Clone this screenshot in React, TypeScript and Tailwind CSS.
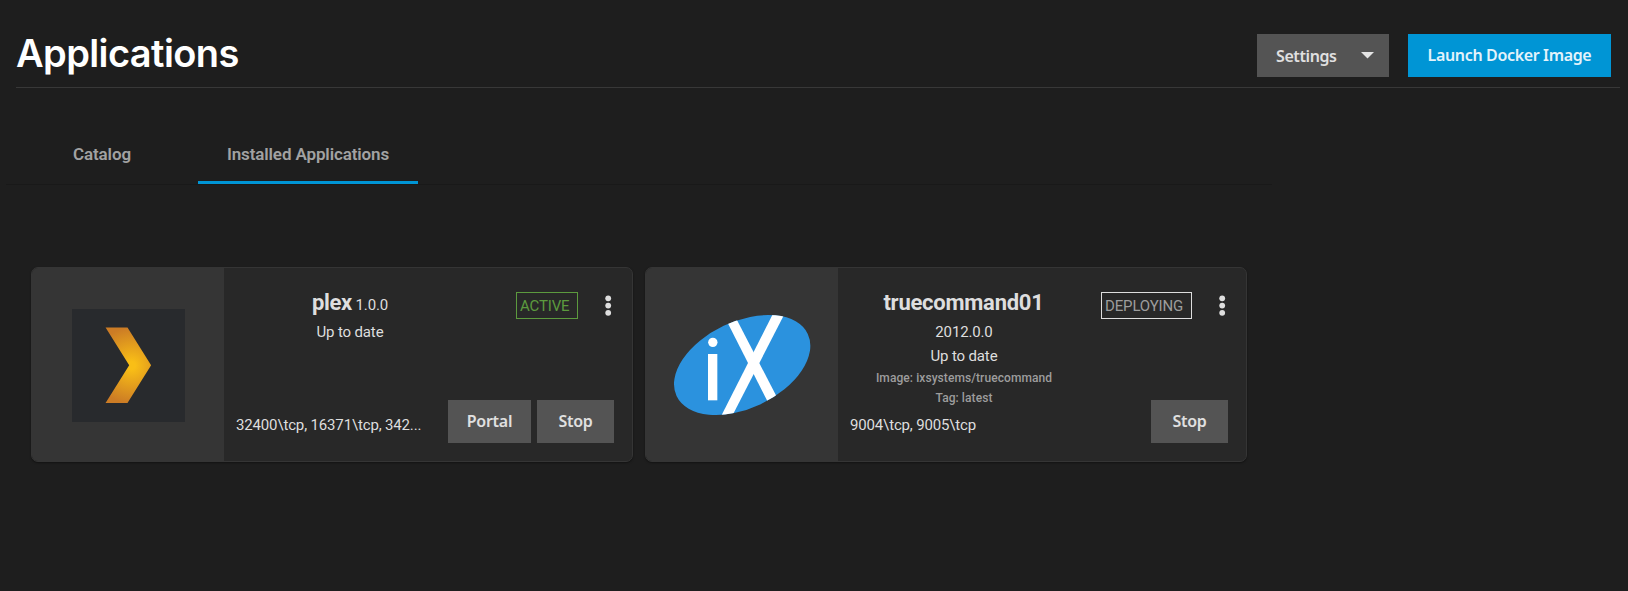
import type { ReactNode } from "react";

const plexSans = "font-['Noto_Sans','Open_Sans',sans-serif]";

function PlexLogo() {
  return (
    <svg className="mt-px ml-px" width="113" height="113" viewBox="0 0 340 340" aria-hidden="true">
      <defs>
        <radialGradient id="plexGlow" gradientUnits="userSpaceOnUse" cx="179" cy="170" r="114">
          <stop offset="0.1" stopColor="#f9be16" />
          <stop offset="1" stopColor="#cc7c25" />
        </radialGradient>
      </defs>
      <rect width="340" height="340" fill="#282a2d" />
      <path d="M101 56H167L238 169L167 283H101L172 169Z" fill="url(#plexGlow)" />
    </svg>
  );
}

function IxLogo() {
  return (
    <svg width="138" height="102" viewBox="99 177 414 306" aria-hidden="true">
      <defs>
        <clipPath id="ixOval">
          <ellipse cx="306.5" cy="330" rx="217.7" ry="130" transform="rotate(-25.3 306.5 330)" />
        </clipPath>
      </defs>
      <g clipPath="url(#ixOval)">
        <rect x="90" y="170" width="430" height="320" fill="#2b92de" />
        <path d="M248 174L280 174L423 450L388 450Z" fill="#fff" />
        <path d="M400 174L435 174L276 484L243 484Z" fill="#fff" />
        <rect x="204" y="297" width="28" height="139" fill="#fff" />
        <circle cx="218.5" cy="262" r="14" fill="#fff" />
      </g>
    </svg>
  );
}

function MoreIcon() {
  return (
    <svg width="12" height="22" viewBox="0 0 12 22" fill="#dedede" aria-hidden="true">
      <circle cx="6.2" cy="3.3" r="2.9" />
      <circle cx="6.2" cy="10.6" r="2.9" />
      <circle cx="6.2" cy="17.8" r="2.9" />
    </svg>
  );
}

function CardButton({ children, className }: { children: ReactNode; className: string }) {
  return (
    <button
      className={`h-[43px] bg-[#545454] pb-0.5 text-base font-semibold tracking-[-0.25px] text-[#e0e0e0] ${plexSans} ${className}`}
    >
      {children}
    </button>
  );
}

type CardProps = {
  logo: ReactNode;
  ports: string;
  badge: ReactNode;
  buttons: ReactNode;
  children: ReactNode;
};

function AppCard({ logo, ports, badge, buttons, children }: CardProps) {
  return (
    <article className="flex h-[195px] w-[602px] overflow-hidden rounded-[7px] border border-[#353535] bg-[#282828] shadow-[0_1px_2px_rgba(0,0,0,0.4)]">
      <div className="flex w-[192px] shrink-0 items-center justify-center bg-[#353535]">{logo}</div>
      <div className="flex flex-1 pr-[18px] pl-3 text-[15px] text-[#dedede]">
        <div className="-mr-6 flex w-[228px] shrink-0 flex-col pt-[19px] pb-6">
          <div className="flex flex-col items-center font-[450] tracking-[-0.15px]">{children}</div>
          <div className="mt-auto leading-6 font-[450] tracking-[-0.15px] whitespace-nowrap">{ports}</div>
        </div>
        <div className="flex flex-1 flex-col items-end justify-between pt-6 pb-[18px]">
          <div className="flex items-center gap-6">
            {badge}
            <MoreIcon />
          </div>
          <div className="flex gap-1.5">{buttons}</div>
        </div>
      </div>
    </article>
  );
}

export default function App() {
  return (
    <main className="h-[591px] w-full overflow-hidden bg-[#1e1e1e] font-[Roboto,sans-serif]">
      <header className="mr-2 ml-4 flex h-[88px] justify-between border-b border-[#383838]">
        <h1 className="pt-[30px] font-[Inter,sans-serif] text-[38px] leading-[46px] font-semibold tracking-[-0.6px] text-white">
          Applications
        </h1>
        <div className={`flex gap-[19px] pt-[34px] pr-[9px] ${plexSans}`}>
          <button className="flex h-[43px] w-[132px] items-center justify-between bg-[#545454] pr-[15px] pl-[19px] text-base font-semibold tracking-[-0.4px] text-[#e0e0e0]">
            <span>Settings</span>
            <svg width="13" height="7" viewBox="0 0 13 7" fill="#e4e4e4" aria-hidden="true">
              <path d="M0 0H13L6.5 6.5Z" />
            </svg>
          </button>
          <button className="h-[43px] w-[203px] bg-[#0095d5] pb-0.5 text-base font-semibold tracking-[-0.35px] text-[#e3f3fb]">
            Launch Docker Image
          </button>
        </div>
      </header>
      <nav className="mt-8 ml-1.5 flex h-[65px] w-[1266px] border-b border-[#191919] text-[17px] font-semibold tracking-[-0.12px] text-[#a2a2a2]">
        <button className="h-16 w-48 pt-[5px]">Catalog</button>
        <button className="h-16 w-[220px] border-b-[3px] border-[#0095d5] pt-2">Installed Applications</button>
      </nav>
      <section className="mt-[82px] ml-[31px] flex gap-3">
        <AppCard
          logo={<PlexLogo />}
          ports={"32400\\tcp, 16371\\tcp, 342..."}
          badge={
            <span className="h-[27px] w-[62px] border border-[#5c9a3e] pl-[3px] text-[15px] leading-[26px] tracking-[-0.15px] text-[#5c9a3e]">
              ACTIVE
            </span>
          }
          buttons={
            <>
              <CardButton className="w-[83px]">Portal</CardButton>
              <CardButton className="w-[77px]">Stop</CardButton>
            </>
          }
        >
          <div className="mb-px h-8 leading-8">
            <strong className="text-[22px] font-bold tracking-[-0.3px]">plex</strong> 1.0.0
          </div>
          <div className="leading-6">Up to date</div>
        </AppCard>
        <AppCard
          logo={<IxLogo />}
          ports={"9004\\tcp, 9005\\tcp"}
          badge={
            <span className="h-[27px] w-[91px] border border-[#dedede] pl-[3px] text-[15px] leading-[26px] tracking-[-0.15px] text-[#9d9d9d]">
              DEPLOYING
            </span>
          }
          buttons={<CardButton className="w-[77px]">Stop</CardButton>}
        >
          <div className="mb-px pr-px text-[22px] leading-8 font-bold tracking-[-0.25px]">truecommand01</div>
          <div className="leading-6">2012.0.0</div>
          <div className="leading-6">Up to date</div>
          <div className="text-[12px] leading-5 font-medium tracking-[0.08px] text-[#9d9d9d]">
            Image: ixsystems/truecommand
          </div>
          <div className="text-[12px] leading-5 font-medium tracking-[0.08px] text-[#9d9d9d]">Tag: latest</div>
        </AppCard>
      </section>
    </main>
  );
}
